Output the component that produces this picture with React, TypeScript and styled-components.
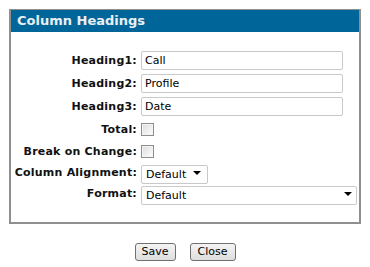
import React from "react";
import styled, { createGlobalStyle } from "styled-components";

const Global = createGlobalStyle`
  html, body { margin: 0; padding: 0; background: #fff; }
  body { font-family: Verdana, "DejaVu Sans", sans-serif; color: #000; }
`;

const Page = styled.div`
  width: 370px;
  padding-top: 9px;
  display: flex;
  flex-direction: column;
  align-items: center;
`;

const Panel = styled.section`
  width: 352px;
  box-sizing: border-box;
  border: 2px solid #8f8f8f;
  border-top-width: 1px;
  background: #fff;
`;

const Header = styled.h2`
  margin: 0;
  height: 22px;
  background: #006699;
  color: #e9eff5;
  font-size: 13px;
  font-weight: bold;
  line-height: 22px;
  padding-left: 6px;
`;

const Form = styled.div`
  display: grid;
  grid-template-columns: 124px 216px;
  grid-template-rows: 23px 23px 23px 22px 22px 21px 21px;
  column-gap: 4px;
  padding: 17px 0 18px 2px;
`;

const Label = styled.label`
  font-size: 11px;
  font-weight: bold;
  letter-spacing: 0.22px;
  text-align: right;
  align-self: center;
  white-space: nowrap;
  color: #111;
`;

const Cell = styled.div`
  display: flex;
  align-items: center;
`;

const TextInput = styled.input`
  box-sizing: border-box;
  width: 202px;
  height: 19px;
  border: 1px solid #c9c9c9;
  border-radius: 2px;
  padding: 0 3px;
  font-family: Verdana, "DejaVu Sans", sans-serif;
  font-size: 11px;
  color: #000;
  outline: none;
`;

const Check = styled.input`
  appearance: none;
  margin: 0;
  width: 13px;
  height: 13px;
  box-sizing: border-box;
  border: 1px solid #8e8e8e;
  background: linear-gradient(135deg, #dcdcdc 0%, #f4f4f4 70%, #ffffff 100%);
  box-shadow: inset 0 0 0 1px #f4f4f4;
`;

const SelectWrap = styled.div<{ $w: number; $arrowRight: number }>`
  position: relative;
  width: ${(p) => p.$w}px;
  height: 19px;
  &::after {
    content: "";
    position: absolute;
    right: ${(p) => p.$arrowRight}px;
    top: 8px;
    border-left: 4px solid transparent;
    border-right: 4px solid transparent;
    border-top: 4px solid #000;
    pointer-events: none;
  }
`;

const Select = styled.select`
  appearance: none;
  box-sizing: border-box;
  width: 100%;
  height: 19px;
  border: 1px solid #c9c9c9;
  border-radius: 2px;
  background: #fff;
  padding: 0 0 0 4px;
  font-family: Verdana, "DejaVu Sans", sans-serif;
  font-size: 11px;
  color: #000;
  outline: none;
`;

const Buttons = styled.div`
  display: flex;
  gap: 14px;
  margin-top: 19px;
`;

const Button = styled.button<{ $w: number }>`
  width: ${(p) => p.$w}px;
  height: 18px;
  padding: 0;
  box-sizing: border-box;
  border: 1px solid #707070;
  border-radius: 3px;
  background: linear-gradient(#f4f4f4, #dedede);
  font-family: Verdana, "DejaVu Sans", sans-serif;
  font-size: 11px;
  color: #000;
  line-height: 16px;
`;

export default function App() {
  return (
    <>
      <Global />
      <Page>
        <Panel>
          <Header>Column Headings</Header>
          <Form>
            <Label>Heading1:</Label>
            <Cell>
              <TextInput defaultValue="Call" />
            </Cell>
            <Label>Heading2:</Label>
            <Cell>
              <TextInput defaultValue="Profile" />
            </Cell>
            <Label>Heading3:</Label>
            <Cell>
              <TextInput defaultValue="Date" />
            </Cell>
            <Label>Total:</Label>
            <Cell>
              <Check type="checkbox" />
            </Cell>
            <Label>Break on Change:</Label>
            <Cell>
              <Check type="checkbox" />
            </Cell>
            <Label>Column Alignment:</Label>
            <Cell>
              <SelectWrap $w={67} $arrowRight={7}>
                <Select defaultValue="Default">
                  <option>Default</option>
                </Select>
              </SelectWrap>
            </Cell>
            <Label>Format:</Label>
            <Cell>
              <SelectWrap $w={216} $arrowRight={5}>
                <Select defaultValue="Default">
                  <option>Default</option>
                </Select>
              </SelectWrap>
            </Cell>
          </Form>
        </Panel>
        <Buttons>
          <Button $w={41}>Save</Button>
          <Button $w={46}>Close</Button>
        </Buttons>
      </Page>
    </>
  );
}
